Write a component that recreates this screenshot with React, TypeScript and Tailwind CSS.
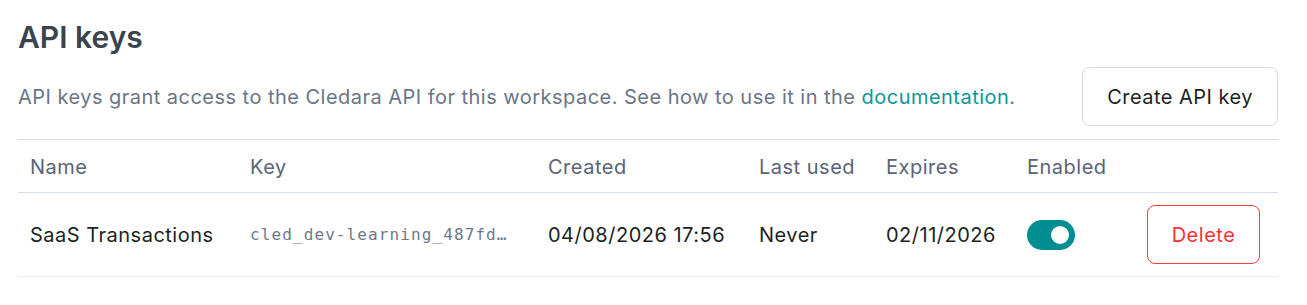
const cols = "grid grid-cols-[220px_298px_211px_127px_141px_120px_1fr] items-center";

function Toggle({ on }: { on: boolean }) {
  return (
    <button
      role="switch"
      aria-checked={on}
      className={`flex h-[30px] w-[48px] items-center rounded-full px-[6px] ${on ? "justify-end bg-[#008e93]" : "justify-start bg-[#d1d5db]"}`}
    >
      <span className="block h-[18px] w-[18px] rounded-full bg-white" />
    </button>
  );
}

export default function App() {
  return (
    <div className="min-h-screen w-[1296px] bg-white px-[18px] pt-[19px] font-['Inter',sans-serif]">
      <h1 className="text-[30px] leading-[36px] font-semibold text-[#3b434d]">API keys</h1>

      <div className="mt-[12px] flex items-center justify-between tracking-[0.47px]">
        <p className="text-[20px] leading-[30px] text-[#6b7585]">
          API keys grant access to the Cledara API for this workspace. See how to use it in the{" "}
          <a href="#" className="text-[#0e9696]">documentation</a>.
        </p>
        <button className="h-[59px] rounded-lg border border-[#d5dae1] bg-white px-6 text-[20px] text-[#1c1f23]">
          Create API key
        </button>
      </div>

      <div className="mt-[13px] text-[20px] tracking-[0.5px]">
        <div className={`${cols} h-[54px] border-y border-[#d7dde5] pt-px text-[#5a6377]`}>
          <div className="pl-3">Name</div>
          <div className="pl-3">Key</div>
          <div className="pl-3">Created</div>
          <div className="pl-3">Last used</div>
          <div className="pl-3">Expires</div>
          <div className="pl-3">Enabled</div>
          <div />
        </div>
        <div className={`${cols} h-[84px] border-b border-[#eaedf1] text-[#1c1f23]`}>
          <div className="pl-3">SaaS Transactions</div>
          <div className="pl-3 font-['DejaVu_Sans_Mono',monospace] text-[16px] tracking-[1.1px] text-[#6f7887]">
            cled_dev-learning_487fd…
          </div>
          <div className="pl-3">04/08/2026 17:56</div>
          <div className="pl-3">Never</div>
          <div className="pl-3">02/11/2026</div>
          <div className="pl-3">
            <Toggle on />
          </div>
          <div className="pl-3">
            <button className="h-[59px] w-[113px] rounded-lg border border-[#ff3b41] text-[#f8333a]">
              Delete
            </button>
          </div>
        </div>
      </div>
    </div>
  );
}
